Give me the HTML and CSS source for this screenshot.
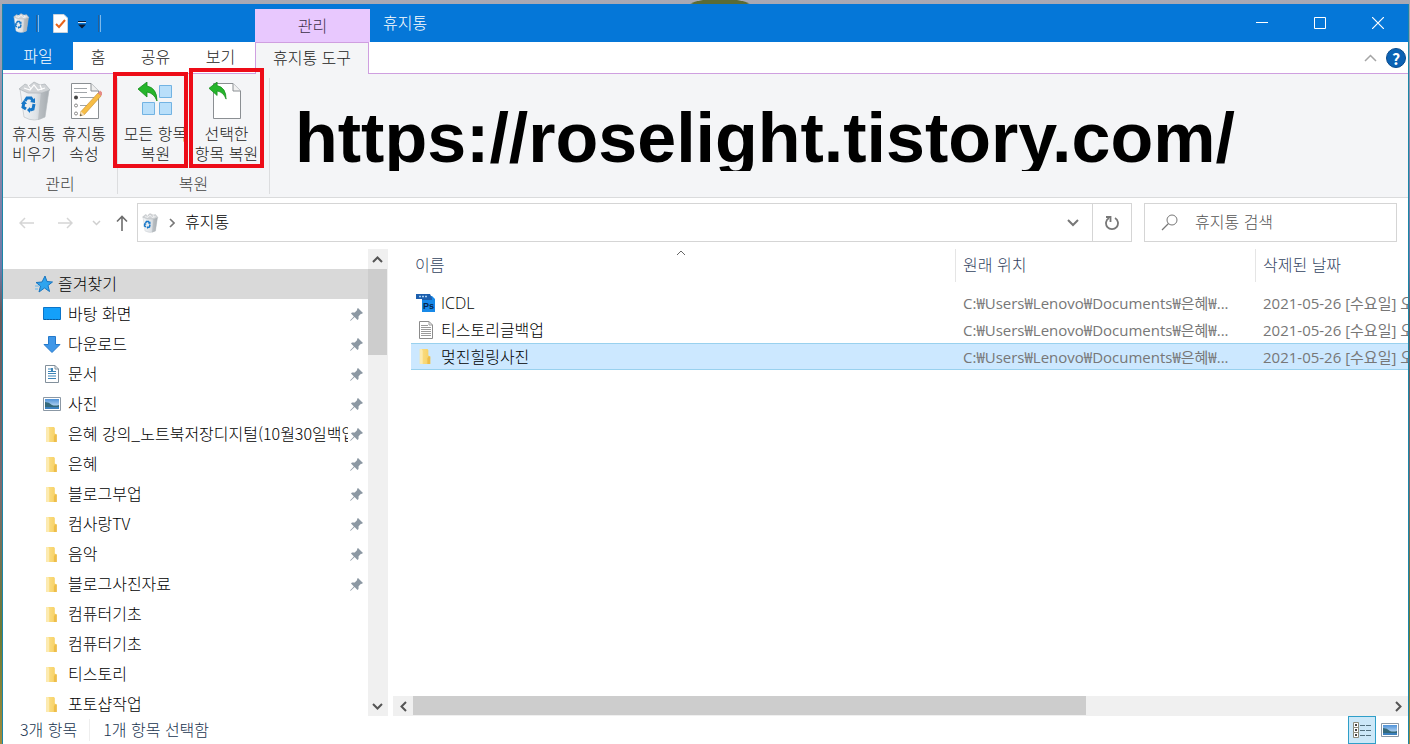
FILE: index.html
```html
<!DOCTYPE html>
<html lang="ko">
<head>
    <meta charset="UTF-8">
    <meta name="viewport" content="width=device-width, initial-scale=1.0">
    <title>휴지통</title>
    <link rel="stylesheet" href="styles.css">
</head>
<body>
    <!-- shared icons -->
    <svg class="defs" aria-hidden="true">
        <linearGradient id="binshade" x1="0" x2="1"><stop offset="0" stop-color="#f4f6f8"/><stop offset=".55" stop-color="#dfe3e7"/><stop offset="1" stop-color="#a9afb4"/></linearGradient>
        <linearGradient id="sky" x1="0" y1="0" x2="0" y2="1"><stop offset="0" stop-color="#4f92d8"/><stop offset="1" stop-color="#dff0fb"/></linearGradient>
        <linearGradient id="foldershade" x1="0" x2="1"><stop offset="0" stop-color="#fbe08a"/><stop offset="1" stop-color="#f6cf62"/></linearGradient>
        <symbol id="bin" viewBox="0 0 36 40">
            <path d="M4 8L33 9L29 36Q18 42 8 36Z" fill="url(#binshade)" stroke="#c3c8cc" stroke-width=".8"/>
            <path d="M25 11L33 9L29 36L22 39Z" fill="#a4aaae" opacity=".5"/>
            <path d="M3 8L9 3L13 5L18 1L24 4L29 3L34 9L26 12L12 12Z" fill="#d0d3d6" stroke="#aeb3b7" stroke-width=".7"/>
            <path d="M8 7L14 9L18 4L22 9L29 7M12 4L15 8M24 4L26 9" fill="none" stroke="#fff" stroke-width="1.2"/>
            <path d="M9 20L11 17L15 17L17 20" fill="none" stroke="#1677c8" stroke-width="3"/>
            <path d="M18 23L17 28L14 29M10 28L7 26L8 22" fill="none" stroke="#1677c8" stroke-width="3"/>
            <path d="M14 21L19 22L19 17ZM14 26L11 29L14 32ZM5 23L8 19L11 23Z" fill="#1677c8"/>
        </symbol>
        <symbol id="folder" viewBox="0 0 14 18">
            <path d="M1 1H9L10 2V8L12 9V17H1Z" fill="url(#foldershade)"/>
            <path d="M1 1H3L4 3V17H1Z" fill="#fdebb0"/>
            <path d="M10 9H12V17H9V11Z" fill="#edbd4b"/>
        </symbol>
        <symbol id="pin" viewBox="0 0 13 13">
            <path d="M8 0L13 5L11.500 6L11 5.800L8.600 8.200L8.500 11L7.500 12L4.600 9.100L1 12.500L0 13L.5 12L3.900 8.400L1 5.500L2 4.500L4.800 4.400L7.200 2L7 1Z" fill="#8c98a3"/>
        </symbol>
        <symbol id="picture" viewBox="0 0 18 14">
            <path d="M.5 .5H17.500V13.500H.5Z" fill="#fff" stroke="#8b98a5"/>
            <path d="M2 2H16V12H2Z" fill="url(#sky)"/>
            <path d="M2 5Q6 5 9 8Q12 9 16 8V12H2Z" fill="#35697a"/>
            <path d="M2 10H16V12H2Z" fill="#3c80bd"/>
        </symbol>
        <symbol id="restore" viewBox="0 0 20 20">
            <path d="M0 7L9 0V4Q19 6 19 19Q16 11 9 10V15Z" fill="#25b52b" stroke="#138a19" stroke-width=".8"/>
        </symbol>
    </svg>

    <div class="window">
        <header class="titlebar">
            <div class="quick">
                <svg class="i18"><use href="#bin"/></svg>
                <span class="bar"></span>
                <button aria-label="속성"><svg width="15" height="19" viewBox="0 0 15 19"><path d="M.5 .5H11L14.500 4V18.500H.5Z" fill="#fff" stroke="#c9d3dc"/><path d="M3 10L6 13L12 6" fill="none" stroke="#e8641b" stroke-width="2"/></svg></button>
                <button class="more" aria-label="사용자 지정"><svg width="8" height="8" viewBox="0 0 8 8"><path d="M0 .5H8" stroke="#0b1b33"/><path d="M0 1.500H8" stroke="#cfe4f7"/><path d="M0 3.500H8L4 7.500Z" fill="#0b1b33"/></svg></button>
                <span class="bar"></span>
            </div>
            <div class="context">관리</div>
            <h1>휴지통</h1>
            <div class="controls">
                <button aria-label="최소화"><svg width="12" height="12"><path d="M0 5.500H12" stroke="#fff"/></svg></button>
                <button aria-label="최대화"><svg width="12" height="12"><path d="M.5 .5H11.500V11.500H.5Z" fill="none" stroke="#fff"/></svg></button>
                <button aria-label="닫기"><svg width="12" height="12"><path d="M0 0L12 12M12 0L0 12" stroke="#fff" stroke-width="1.200"/></svg></button>
            </div>
        </header>

        <nav class="tabs">
            <button class="file">파일</button>
            <button class="home">홈</button>
            <button>공유</button>
            <button>보기</button>
            <button class="active">휴지통 도구</button>
            <div class="help">
                <button aria-label="리본 최소화"><svg width="13" height="8"><path d="M1 7L6.500 1.500L12 7" fill="none" stroke="#a5a5a5" stroke-width="1.500"/></svg></button>
                <button class="question" aria-label="도움말">?</button>
            </div>
        </nav>

        <section class="ribbon">
            <div class="group manage">
                <div class="tools">
                    <button><svg class="i40"><use href="#bin"/></svg><span>휴지통<br>비우기</span></button>
                    <button>
                        <svg class="i40" viewBox="0 0 36 40">
                            <path d="M5.500 2.500H25L32.500 10V37.500H5.500Z" fill="#fff" stroke="#8a8f93"/>
                            <path d="M25 2.500V10H32.500" fill="#eee" stroke="#8a8f93"/>
                            <path d="M8 7.500H21M8 11.500H21M14 16.500H28M14 24.500H22M14 32.500H19" stroke="#a0a5a9"/>
                            <circle cx="10" cy="16.500" r="2" fill="#444"/><circle cx="10" cy="24.500" r="1.500" fill="none" stroke="#888"/><circle cx="10" cy="32.500" r="1.500" fill="none" stroke="#888"/>
                            <path d="M14 35L15 30.500L32 12L35 15L18.500 33.500Z" fill="#f6bd45" stroke="#c48c2c" stroke-width=".6"/>
                            <path d="M32 12L34 9.500L37.500 12.500L35 15Z" fill="#e58c87"/><path d="M14 35L15 30.500L18.500 33.500Z" fill="#f6dfb7"/><path d="M14 35L14.500 33L16 34.300Z" fill="#333"/>
                        </svg>
                        <span>휴지통<br>속성</span>
                    </button>
                </div>
                <h2>관리</h2>
            </div>
            <div class="group restore">
                <div class="tools">
                    <button class="marked all">
                        <svg class="i40" viewBox="0 0 36 40">
                            <path d="M21.500 4.500H33.500V16.500H21.500ZM4.500 21.500H16.500V33.500H4.500ZM21.500 21.500H33.500V33.500H21.500Z" fill="#b9dffa" stroke="#72b3e3"/>
                            <use href="#restore" x="0" y="1" width="20" height="20"/>
                        </svg>
                        <span>모든 항목<br>복원</span>
                    </button>
                    <button class="marked picked">
                        <svg class="i40" viewBox="0 0 36 40">
                            <path d="M4.500 2.500H24L31.500 10V37.500H4.500Z" fill="#fff" stroke="#8b8f93"/>
                            <path d="M24 2.500V10H31.500" fill="#f1f1f1" stroke="#8b8f93"/>
                            <use href="#restore" x="0" y="1" width="18" height="18"/>
                        </svg>
                        <span>선택한<br>항목 복원</span>
                    </button>
                </div>
                <h2>복원</h2>
            </div>
            <p class="site">https://roselight.tistory.com/</p>
        </section>

        <div class="addressbar">
            <div class="arrows">
                <button aria-label="뒤로" disabled><svg width="16" height="12"><path d="M15 6H1M6 1L1 6L6 11" fill="none" stroke="#d5d5d5" stroke-width="1.500"/></svg></button>
                <button aria-label="앞으로" disabled><svg width="16" height="12"><path d="M1 6H15M10 1L15 6L10 11" fill="none" stroke="#d5d5d5" stroke-width="1.500"/></svg></button>
                <button class="small" aria-label="최근 위치" disabled><svg width="9" height="6"><path d="M1 1L4.500 4.500L8 1" fill="none" stroke="#cfcfcf" stroke-width="1.500"/></svg></button>
                <button class="small" aria-label="위로"><svg width="12" height="16"><path d="M6 16V1.500M1 6.500L6 1.500L11 6.500" fill="none" stroke="#6d6d6d" stroke-width="1.600"/></svg></button>
            </div>
            <div class="path">
                <svg class="i18"><use href="#bin"/></svg>
                <svg class="sep" width="6" height="10"><path d="M1 1L5 5L1 9" fill="none" stroke="#777" stroke-width="1.600"/></svg>
                <a href="#">휴지통</a>
                <button class="drop" aria-label="이전 위치"><svg width="12" height="8"><path d="M1 1L6 6L11 1" fill="none" stroke="#777" stroke-width="2"/></svg></button>
                <button class="refresh" aria-label="새로 고침"><svg width="15" height="16" viewBox="0 0 15 16"><path d="M10 3A6 6 0 1 1 4 3" fill="none" stroke="#777" stroke-width="1.800"/><path d="M1 2H5.500V7" fill="none" stroke="#777" stroke-width="1.800"/></svg></button>
            </div>
            <label class="search">
                <svg width="17" height="17"><circle cx="11" cy="6" r="5" fill="none" stroke="#777"/><path d="M7.500 9.500L1 16" stroke="#777" stroke-width="1.200"/></svg>
                <input type="search" placeholder="휴지통 검색" aria-label="휴지통 검색">
            </label>
        </div>

        <div class="content">
            <nav class="sidebar">
                <a class="head" href="#"><svg width="18" height="18" viewBox="0 0 18 18"><path d="M10 1L12 6.500L17.500 7L13 10.500L14.500 16.500L9.500 13L4 17L5.500 11L1 7.500L7 7Z" fill="#2fa4ee" stroke="#1975c0"/><path d="M0 11H4M0 14H3" stroke="#64b9ee"/></svg><span>즐겨찾기</span></a>
                <a href="#"><svg width="18" height="14"><path d="M.5 .5H17.500V12.500H.5Z" fill="#14a0fa" stroke="#0b75c9"/><path d="M1 12.500H17" stroke="#0c5d9e" stroke-dasharray="2 1"/></svg><span>바탕 화면</span><svg class="pin"><use href="#pin"/></svg></a>
                <a href="#"><svg width="18" height="17"><path d="M5.500 .5H12.500V8.500H17L9 16.500L1 8.500H5.500Z" fill="#3f97e8" stroke="#2479cb"/></svg><span>다운로드</span><svg class="pin"><use href="#pin"/></svg></a>
                <a href="#"><svg width="18" height="18"><path d="M2.500 .5H12L15.500 4V17.500H2.500Z" fill="#fff" stroke="#82909c"/><path d="M12 .5V4H15.500" fill="none" stroke="#82909c"/><path d="M5 4H9M5 6.500H13M5 8.500H13M5 11H13M5 13.500H13" stroke="#3c85b8"/><path d="M8 3H10V6H8Z" fill="#3c85b8"/></svg><span>문서</span><svg class="pin"><use href="#pin"/></svg></a>
                <a href="#"><svg width="18" height="14"><use href="#picture"/></svg><span>사진</span><svg class="pin"><use href="#pin"/></svg></a>
                <a href="#"><svg class="folder"><use href="#folder"/></svg><span>은혜 강의_노트북저장디지털(10월30일백업)</span><svg class="pin"><use href="#pin"/></svg></a>
                <a href="#"><svg class="folder"><use href="#folder"/></svg><span>은혜</span><svg class="pin"><use href="#pin"/></svg></a>
                <a href="#"><svg class="folder"><use href="#folder"/></svg><span>블로그부업</span><svg class="pin"><use href="#pin"/></svg></a>
                <a href="#"><svg class="folder"><use href="#folder"/></svg><span>컴사랑TV</span><svg class="pin"><use href="#pin"/></svg></a>
                <a href="#"><svg class="folder"><use href="#folder"/></svg><span>음악</span><svg class="pin"><use href="#pin"/></svg></a>
                <a href="#"><svg class="folder"><use href="#folder"/></svg><span>블로그사진자료</span><svg class="pin"><use href="#pin"/></svg></a>
                <a href="#"><svg class="folder"><use href="#folder"/></svg><span>컴퓨터기초</span></a>
                <a href="#"><svg class="folder"><use href="#folder"/></svg><span>컴퓨터기초</span></a>
                <a href="#"><svg class="folder"><use href="#folder"/></svg><span>티스토리</span></a>
                <a href="#"><svg class="folder"><use href="#folder"/></svg><span>포토샵작업</span></a>
            </nav>
            <div class="vscroll">
                <button aria-label="위로 스크롤"><svg width="11" height="7"><path d="M1 6L5.500 1.500L10 6" fill="none" stroke="#555" stroke-width="2"/></svg></button>
                <div class="thumb"></div>
                <button aria-label="아래로 스크롤"><svg width="11" height="7"><path d="M1 1L5.500 5.500L10 1" fill="none" stroke="#555" stroke-width="2"/></svg></button>
            </div>

            <main class="files">
                <table>
                    <colgroup><col><col class="place"><col class="date"></colgroup>
                    <thead>
                        <tr>
                            <th>이름<svg class="sort" width="10" height="6"><path d="M1 5L5 1L9 5" fill="none" stroke="#666"/></svg></th>
                            <th>원래 위치</th>
                            <th>삭제된 날짜</th>
                        </tr>
                    </thead>
                    <tbody>
                        <tr>
                            <td><div class="name"><svg width="19" height="18" viewBox="0 0 19 18"><path d="M6 2H16L19 5V18H6Z" fill="#1789e8"/><path d="M0 0H14L16 4V6H6V5H0Z" fill="#1c5fae"/><path d="M3 2.500H11" stroke="#a8cff2" stroke-width="1.500" stroke-dasharray="2 1"/><text x="7" y="15" class="ps">Ps</text></svg>ICDL</div></td>
                            <td>C:₩Users₩Lenovo₩Documents₩은혜₩...</td>
                            <td>2021-05-26 [수요일] 오후</td>
                        </tr>
                        <tr>
                            <td><div class="name"><svg width="19" height="18"><path d="M3.500 .5H13L16.500 4V17.500H3.500Z" fill="#fff" stroke="#8b8b8b"/><path d="M13 .5V4H16.500M5 4.500H12M5 6.500H15M5 8.500H15M5 10.500H15M5 12.500H15M5 14.500H15" fill="none" stroke="#9a9a9a"/></svg>티스토리글백업</div></td>
                            <td>C:₩Users₩Lenovo₩Documents₩은혜₩...</td>
                            <td>2021-05-26 [수요일] 오후</td>
                        </tr>
                        <tr class="selected">
                            <td><div class="name"><svg width="19" height="17"><use href="#folder"/></svg>멎진힐링사진</div></td>
                            <td>C:₩Users₩Lenovo₩Documents₩은혜₩...</td>
                            <td>2021-05-26 [수요일] 오후</td>
                        </tr>
                    </tbody>
                </table>
                <div class="hscroll">
                    <button aria-label="왼쪽으로 스크롤"><svg width="7" height="11"><path d="M6 1L1.500 5.500L6 10" fill="none" stroke="#555" stroke-width="2"/></svg></button>
                    <div class="track"><div class="thumb"></div></div>
                    <button aria-label="오른쪽으로 스크롤"><svg width="7" height="11"><path d="M1 1L5.500 5.500L1 10" fill="none" stroke="#555" stroke-width="2"/></svg></button>
                </div>
            </main>
        </div>

        <footer class="status">
            <span>3개 항목</span>
            <span class="chosen">1개 항목 선택함</span>
            <div class="views">
                <button class="on" aria-label="자세히"><svg width="19" height="17"><path d="M.5 .5H5.500V5.500H.5ZM.5 5.500H5.500V10.500H.5ZM.5 10.500H5.500V15.500H.5Z" fill="#fff" stroke="#8b8b7b"/><path d="M2 3H4M2 8H4M2 13H4" stroke="#444" stroke-width="2"/><path d="M7 3.500H18M7 8.500H18M7 13.500H18" stroke="#53707e" stroke-dasharray="5 1"/></svg></button>
                <button aria-label="큰 아이콘"><svg width="18" height="14"><use href="#picture"/></svg></button>
            </div>
        </footer>
    </div>
</body>
</html>
```

FILE: styles.css
```css
* {box-sizing: border-box;}
body {margin: 0; height: 100vh; padding: 4px 1px 0 2px; overflow: hidden; background: radial-gradient(ellipse 30px 5px at 720px 4px, #5a6b35 90%, transparent), linear-gradient(to bottom, #a9a9b4 0%, #8d86a8 20%, #6e7aa8 36%, #6b5a5c 42%, #7c6b70 65%, #6d7a35 85%, #a08a3c 100%); color: #000000;}
body, button, input, table {font-family: "Noto Sans CJK KR", sans-serif; font-size: 16px; font-weight: 300; line-height: 20px;}
button {border: 0; padding: 0; margin: 0; background: none; color: inherit; display: flex; align-items: center; justify-content: center;}
svg {display: block; flex: none;}
a {color: inherit; text-decoration: none;}
h1, h2, p {margin: 0; font-size: 16px; font-weight: 300;}
.defs {position: absolute; width: 0; height: 0;}
.i18 {width: 18px; height: 20px;}
.i40 {width: 36px; height: 40px;}

.window {height: 100%; display: flex; flex-direction: column; background: #ffffff; border-left: 1px solid #1a86a8; border-right: 1px solid #1a86a8;}

/* title bar */
.titlebar {display: flex; height: 38px; flex: none; background: #0577d8; color: #ffffff;}
.quick {width: 252px; display: flex; align-items: center; gap: 12px; padding-left: 9px;}
.quick .bar {width: 3px; height: 17px; border-left: 1px solid #2b5f92; border-right: 1px solid #7db9ec; margin: 0 2px 0 -6px;}
.quick button + .bar {margin-left: 0;}
.quick .more {margin-left: -2px; padding-top: 4px;}
.context {width: 115px; margin-top: 5px; padding-bottom: 2px; display: flex; align-items: center; justify-content: center; background: #e8c8fe; color: #3c3048;}
.titlebar h1 {padding: 8px 13px;}
.controls {display: flex; margin-left: auto; padding-right: 1px;}
.controls button {width: 58px;}

/* tabs */
.tabs {display: flex; height: 32px; flex: none; border-bottom: 1px solid #cf9fe0; color: #222222;}
.tabs button {width: 65px; padding-bottom: 4px;}
.tabs .file {width: 70px; height: 28px; padding-bottom: 2px; background: #0577d8; color: #ffffff;}
.tabs .home {width: 50px;}
.tabs .active {width: 114px; margin-left: 2px; height: 32px; background: #f4f5f7; border: 1px solid #cf9fe0; border-bottom: 0;}
.help {display: flex; align-items: center; gap: 9px; margin-left: auto; padding-right: 2px;}
.tabs .help button {width: auto; padding-bottom: 0;}
.tabs .help .question {width: 20px; height: 20px; border-radius: 50%; background: #0b62b4; border: 1px solid #084a8c; color: #ffffff; font-weight: 700;}

/* ribbon */
.ribbon {display: flex; flex: none; height: 124px; background: #f4f5f7; border-bottom: 1px solid #dadbdc;}
.group {width: 115px; margin: 4px 0 3px; border-right: 1px solid #dcdddf; text-align: center; color: #222222;}
.tools {display: flex; padding: 3px 6px 0;}
.tools button {position: relative; flex-direction: column; width: 50px; white-space: nowrap;}
.tools button span {line-height: 20px; margin-top: 2px;}
.restore {width: 152px;}
.restore .tools {padding: 3px 6px 0 2px;}
.restore .tools button {width: 71px;}
.group h2 {line-height: 20px; color: #444444; margin-top: 10px;}
.marked::after {content: ""; position: absolute; border: 4px solid #ed0c18;}
.all::after {inset: -9px 3px -5px -7px;}
.picked::after {inset: -13px -2px -5px -2px;}
.site {margin: 20px 0 0 25px; height: 77px; overflow: hidden; font: 700 70px/88px "Liberation Sans", Arial, sans-serif; color: #000000;}

/* address bar */
.addressbar {display: flex; flex: none; height: 51px; padding: 5px 11px 7px 5px;}
.arrows {display: flex; width: 129px; flex: none;}
.arrows button {width: 38px;}
.arrows .small {width: 25px;}
.path {flex: 1; display: flex; align-items: center; border: 1px solid #d5d5d5; padding-left: 3px;}
.path .sep {margin: 0 10px 0 10px;}
.path a {padding-bottom: 3px;}
.drop {width: 38px; margin-left: auto;}
.refresh {width: 39px; height: 100%; border-left: 1px solid #d5d5d5;}
.search {width: 253px; margin-left: 12px; display: flex; align-items: center; border: 1px solid #d5d5d5; padding-left: 16px;}
.search input {flex: 1; min-width: 0; border: 0; outline: 0; padding: 0 0 3px 17px; background: none;}
.search input::placeholder {color: #555555; opacity: 1;}

/* folder list */
.content {display: flex; flex: 1; min-height: 0;}
.sidebar {width: 365px; flex: none; padding-top: 20px; overflow: hidden;}
.sidebar a {display: flex; align-items: center; height: 30px; padding: 0 5px 0 40px; gap: 7px;}
.sidebar .head {background: #d9d9d9; padding-left: 32px; gap: 5px;}
.sidebar span {flex: 1; overflow: hidden; white-space: nowrap; line-height: 24px; padding-bottom: 2px;}
.sidebar .pin {width: 13px; height: 13px; margin-left: -5px;}
.sidebar .folder {width: 18px; height: 17px;}
.vscroll {width: 20px; flex: none; display: flex; flex-direction: column; background: #f0f0f0;}
.vscroll button, .hscroll button {width: 20px; height: 20px; flex: none;}
.vscroll button {width: 19px;}
.vscroll .thumb {height: 86px; width: 19px; background: #cdcdcd;}
.vscroll button:last-child {margin-top: auto;}

/* file table */
.files {flex: 1; min-width: 0; display: flex; flex-direction: column; padding-left: 5px;}
table {width: calc(100% - 18px); margin-left: 18px; table-layout: fixed; border-collapse: separate; border-spacing: 0;}
.place {width: 300px;}
.date {width: 153px;}
th {position: relative; height: 33px; padding: 0 0 4px 7px; text-align: left; font-weight: 300; color: #33445f; border-left: 1px solid #e5e5e5;}
th:first-child {border-left: 0; padding-left: 4px;}
.sort {position: absolute; top: 1px; left: 50%; margin-left: -7px;}
tbody::before {content: ""; display: block; height: 7px;}
td {height: 27px; padding: 0 0 0 8px; overflow: hidden; white-space: nowrap; color: #777777; border: 1px solid transparent; border-width: 1px 0; font: 400 15px/20px "Open Sans", "Noto Sans CJK KR", sans-serif;}
td:first-child {padding-left: 5px; color: #000000; font-size: 16px; font-weight: 300;}
.name {display: flex; align-items: center; gap: 6px;}
.selected td {background: #cce8ff; border-color: #99d1ee;}
.ps {font: 700 9px "Liberation Sans", sans-serif; fill: #06284f;}
.hscroll {display: flex; margin-top: auto; height: 20px; background: #f0f0f0;}
.track {flex: 1; padding-bottom: 1px;}
.track .thumb {width: 69%; height: 100%; background: #cdcdcd;}

/* status bar */
.status {display: flex; align-items: center; flex: none; height: 28px; padding-left: 17px; color: #20344f;}
.status span {padding-bottom: 2px;}
.status .chosen {margin-left: 12px; padding-left: 13px; border-left: 1px solid #eeeeee;}
.views {display: flex; margin-left: auto; padding-right: 4px;}
.views button {width: 28px; height: 28px;}
.views .on {background: #cce8f8; border: 1px solid #2f9fc9;}
```
